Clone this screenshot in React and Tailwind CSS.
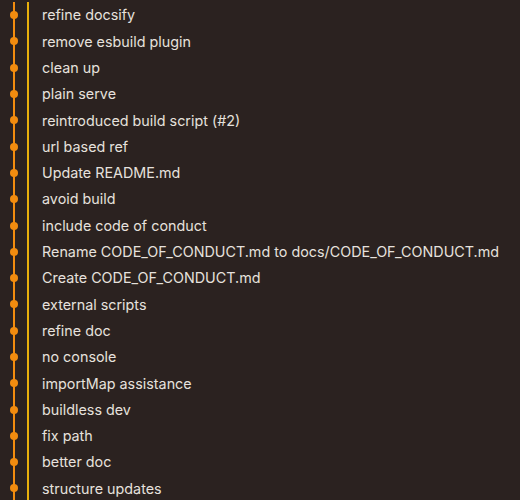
import React from 'react';

const commits = [
  'refine docsify',
  'remove esbuild plugin',
  'clean up',
  'plain serve',
  'reintroduced build script (#2)',
  'url based ref',
  'Update README.md',
  'avoid build',
  'include code of conduct',
  'Rename CODE_OF_CONDUCT.md to docs/CODE_OF_CONDUCT.md',
  'Create CODE_OF_CONDUCT.md',
  'external scripts',
  'refine doc',
  'no console',
  'importMap assistance',
  'buildless dev',
  'fix path',
  'better doc',
  'structure updates',
];

const CommitRow = ({ message }) => (
  <div className="flex h-[26.3px] items-center">
    {/* graph lanes */}
    <div className="relative h-full w-[42px] shrink-0">
      <div className="absolute left-[13px] top-0 h-full w-[2px] bg-[#f28c0f]" />
      <div className="absolute left-[10px] top-1/2 h-[8px] w-[8px] -translate-y-1/2 rounded-full bg-[#f28c0f]" />
      <div className="absolute left-[27px] top-0 h-full w-[2px] bg-[#e9b00c]" />
    </div>
    <span className="whitespace-nowrap text-[14.35px] text-[#e6e1dd]">{message}</span>
  </div>
);

export default function App() {
  return (
    <div
      className="h-[500px] w-[520px] overflow-hidden bg-[#2b2220] pt-[2px]"
      style={{ fontFamily: 'Inter, "Liberation Sans", Arial, sans-serif' }}
    >
      {commits.map((c) => (
        <CommitRow key={c} message={c} />
      ))}
    </div>
  );
}
